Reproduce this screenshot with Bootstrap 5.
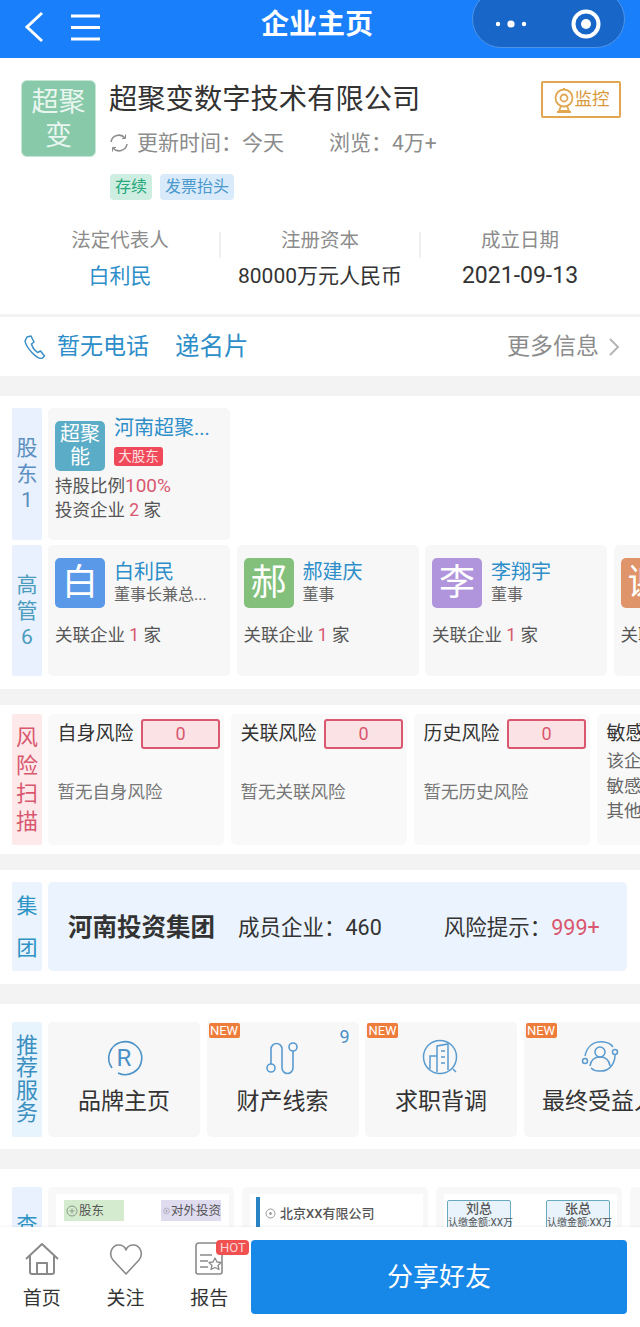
<!DOCTYPE html>
<html lang="zh-CN">
<head>
  <meta charset="UTF-8" />
  <meta name="viewport" content="width=device-width, initial-scale=1.0" />
  <title>企业主页</title>
  <link href="https://cdn.jsdelivr.net/npm/bootstrap@5.3.3/dist/css/bootstrap.min.css" rel="stylesheet" />
  <style>
    body { font-family: Roboto, "Noto Sans CJK SC", sans-serif; color: #333; background: #fff; height: 100vh; overflow: hidden; }
    .page { height: 100vh; }
    .top-bar { height: 58px; flex: 0 0 58px; background: #1a7ffb; display: grid; grid-template-columns: minmax(0, 1fr) auto minmax(0, 1fr); color: #fff; padding: 0 15px 0 0; }
    .top-title { font-size: 28px; font-weight: 700; line-height: 50px; margin-left: 9px; }
    .capsule { width: 153px; height: 58px; margin-top: -10px; padding-top: 10px; background: #1766c8; border: 1px solid #4d94e6; border-radius: 29px; }
    .capsule-cell { height: 48px; flex: 0 0 75px; }
    .capsule-cell + .capsule-line + .capsule-cell { flex: 0 0 76px; }
    .capsule-line { width: 1px; height: 30px; background: #2a74d0; }
    .main-area { flex: 1 1 auto; min-height: 0; overflow: hidden; }

    .company { height: 256px; padding: 22px 19px 0 21px; }
    .logo-box { flex: 0 0 75px; height: 77px; background: #87c9a9; border: 1px solid #c5e5d5; border-radius: 6px; color: #e9f6f0; font-size: 27px; line-height: 34px; }
    .company-name { font-size: 28.300px; line-height: 36px; margin-top: 2px; color: #333; }
    .watch-btn { width: 80px; height: 37px; margin-top: 1px; border: 2px solid #e0a650; border-radius: 2px; color: #d99a3e; font-size: 17.500px; }
    .update-line { font-size: 21px; line-height: 28px; margin-top: 11px; color: #8c8c8c; }
    .tag-line { margin-top: 17px; margin-left: 1px; }
    .state-tag { height: 26px; line-height: 26px; font-size: 16px; padding: 0 5px; border-radius: 4px; }
    .tag-green { background: #cfeee2; color: #25a87a; }
    .tag-blue { background: #d9eafa; color: #4a98cc; }
    .stat-area { margin: 28px -19px 0 -21px; padding: 0 20px; }
    .stat-col { flex: 1 1 0; position: relative; }
    .stat-col + .stat-col::before { content: ""; position: absolute; left: -1px; top: 4px; width: 2px; height: 26px; background: #f0f0f0; }
    .stat-label { font-size: 19.500px; line-height: 26px; color: #8c8c8c; }
    .stat-value { font-size: 21px; line-height: 28px; margin-top: 8px; color: #333; }
    .stat-date { font-size: 23px; }
    .text-link { color: #2d8ec9; }

    .contact-bar { height: 62px; border-top: 3px solid #f2f2f2; padding: 1px 19px 0 24px; font-size: 23px; }
    .more-info { color: #8c8c8c; }
    .band { background: #f3f3f3; }
    .band-20 { height: 20px; }
    .band-16 { height: 16px; }

    .sec { padding-left: 12px; overflow: hidden; }
    .line-wrap { display: flex; gap: 6px; }
    .side-tag { flex: 0 0 30px; width: 30px; background: #e8f1fd; color: #5c8fc0; font-size: 21px; line-height: 26px; border-radius: 2px; text-align: center; }
    .side-red { background: #fde9ea; color: #d9576f; font-size: 22px; line-height: 28px; }
    .side-sky { background: #ebf4fe; color: #2d93c4; line-height: 42px; }
    .side-svc { line-height: 22.500px; font-size: 22px; color: #3a8fc0; }
    .cards { display: flex; gap: 6.500px; flex: 1 1 0; min-width: 0; overflow: hidden; }

    .person-card { flex: 0 0 182px; background: #f7f7f7; border-radius: 5px; padding: 13px 7px 0; font-size: 17.500px; color: #555; white-space: nowrap; }
    .avatar { flex: 0 0 50px; width: 50px; height: 50px; border-radius: 5px; color: #fff; font-size: 36px; line-height: 1; }
    .avatar-small { font-size: 20px; line-height: 23px; background: #5bacc6; }
    .person-name { font-size: 20px; line-height: 24px; color: #2d8ec9; }
    .person-role { font-size: 16px; line-height: 20px; margin-top: 1px; color: #666; }
    .main-badge { display: inline-block; margin-top: 7px; width: 49px; height: 19px; line-height: 19px; font-size: 13.500px; text-align: center; border-radius: 3px; background: #f04a5a; color: #fde0e2; }
    .person-line { line-height: 24px; }
    .num-red { color: #d9576f; }
    .num-big { font-size: 19px; }

    .risk-card { flex: 0 0 176px; height: 131px; background: #f9f9f9; border-radius: 5px; padding: 5px 4px 0 9.500px; white-space: nowrap; }
    .risk-name { font-size: 19px; line-height: 30px; color: #333; }
    .risk-num { width: 79px; height: 30px; line-height: 26px; border: 2px solid #d9576f; border-radius: 3px; background: #fbe3e5; color: #d9576f; font-size: 18px; text-align: center; }
    .risk-note { font-size: 17.500px; line-height: 24px; margin-top: 31px; color: #777; }
    .risk-more { font-size: 17.500px; line-height: 25px; color: #666; }

    .group-panel { flex: 0 0 579px; height: 89px; background: #ebf4fe; border-radius: 5px; padding: 3px 0 0 20px; font-size: 21.500px; white-space: nowrap; }
    .group-name { font-size: 24.500px; font-weight: 700; color: #333; margin-right: 23px; }

    .service-card { flex: 0 0 152px; height: 115px; background: #f7f7f7; border-radius: 5px; padding-top: 16px; position: relative; text-align: center; white-space: nowrap; }
    .service-name { font-size: 23px; line-height: 30px; margin-top: 9px; color: #333; }
    .new-badge { position: absolute; left: 2px; top: 1px; width: 31px; height: 15px; line-height: 15px; font-size: 13px; background: #ee7d3c; color: #fff; border-radius: 2px; }
    .count-mark { position: absolute; right: 9px; top: 4px; font-size: 18px; line-height: 22px; color: #4a90c8; }

    .peek-card { flex: 0 0 186px; background: #f8f8f8; border-radius: 5px; padding: 7px 5px 0 8px; height: 120px; }
    .peek-inner { background: #fff; height: 110px; padding: 6px 8px; font-size: 13px; color: #555; white-space: nowrap; }
    .chip { width: 60px; height: 21px; line-height: 21px; padding-left: 2px; display: flex; align-items: center; gap: 1px; font-size: 12.500px; }
    .chip-green { background: #d5ebcf; }
    .chip-purple { background: #e0dcf0; }
    .peek-firm { border-left: 4px solid #2a83c4; margin: -3px 0 0 -2px; height: 60px; padding: 7px 0 0 5px; font-weight: 500; display: flex; align-items: flex-start; gap: 4px; }
    .peek-firm svg { margin-top: 4px; }
    .peek-box { width: 64px; height: 40px; border: 1px solid #6aa8c0; border-radius: 2px; background: #e8f3fb; text-align: center; }
    .peek-box b { display: block; font-size: 13px; line-height: 16px; font-weight: 500; }
    .peek-box span { display: block; font-size: 10px; line-height: 12px; white-space: nowrap; }

    .bottom-bar { flex: 0 0 100px; height: 100px; background: #fff; box-shadow: 0 -1px 2px rgba(0,0,0,.05); position: relative; }
    .bottom-nav { flex: 0 0 251px; }
    .nav-item { flex: 1 1 0; padding-top: 14px; text-align: center; position: relative; font-size: 19px; color: #333; }
    .nav-item svg { display: block; margin: 0 auto 9px; }
    .nav-text { line-height: 26px; }
    .hot-badge { position: absolute; left: 49px; top: 13px; width: 33px; height: 15px; line-height: 15px; font-size: 13px; background: #f05050; color: #fbd5d5; border-radius: 4px; }
    .share-btn { flex: 0 0 376px; height: 74px; margin-top: 13px; background: #1888e8; border: 0; border-radius: 4px; color: #fff; font-size: 26px; }
    .share-btn:hover { background: #1888e8; color: #fff; }
  </style>
</head>
<body>
  <div class="page d-flex flex-column">
    <!-- 顶部导航 -->
    <header class="top-bar">
      <div class="d-flex align-items-start">
        <svg width="110" height="58" viewBox="0 0 110 58" fill="none" stroke="#fff" stroke-width="3">
          <path d="M42 13 27 27l15 14" />
          <path d="M71 16h29M71 27.500h29M71 39h29" />
        </svg>
      </div>
      <div class="top-title">企业主页</div>
      <div class="d-flex justify-content-end align-items-start">
        <div class="capsule d-flex align-items-center">
          <div class="capsule-cell d-flex align-items-center justify-content-center">
            <svg width="32" height="10" viewBox="0 0 32 10" fill="#fff"><circle cx="3" cy="5" r="2.200" /><circle cx="16" cy="5" r="3.600" /><circle cx="29" cy="5" r="2.200" /></svg>
          </div>
          <div class="capsule-line"></div>
          <div class="capsule-cell d-flex align-items-center justify-content-center">
            <svg width="32" height="32" viewBox="0 0 32 32"><circle cx="16" cy="16" r="12.500" fill="none" stroke="#fff" stroke-width="4" /><circle cx="16" cy="16" r="5" fill="#fff" /></svg>
          </div>
        </div>
      </div>
    </header>

    <main class="main-area">
      <!-- 公司信息 -->
      <section class="company">
        <div class="d-flex">
          <div class="logo-box d-flex align-items-center justify-content-center text-center">超聚<br />变</div>
          <div class="flex-grow-1" style="margin-left: 13px">
            <div class="d-flex justify-content-between align-items-start">
              <div class="company-name">超聚变数字技术有限公司</div>
              <div class="watch-btn d-flex align-items-center justify-content-center">
                <svg width="22" height="28" viewBox="0 0 22 28" fill="none" stroke="#e0a650" stroke-width="1.800">
                  <circle cx="11" cy="12" r="8.500" /><circle cx="11" cy="12" r="3.500" /><path d="M11 2v2M8 20l-2 5h10l-2-5M4 26h14" />
                </svg>
                <span>监控</span>
              </div>
            </div>
            <div class="update-line d-flex align-items-center">
              <svg width="20" height="20" viewBox="0 0 20 20" fill="none" stroke="#8c8c8c" stroke-width="1.500">
                <path d="M2 9a8 8 0 0 1 14-4M18 11a8 8 0 0 1-14 4" />
                <path d="M16.500 1.500V5.500h-3.500M3.500 18.500V14.500h3.500" stroke-width="1" />
              </svg>
              <span style="margin-left: 8px">更新时间：今天</span>
              <span style="margin-left: 45px">浏览：4万+</span>
            </div>
            <div class="tag-line d-flex gap-2">
              <span class="state-tag tag-green">存续</span>
              <span class="state-tag tag-blue">发票抬头</span>
            </div>
          </div>
        </div>
        <div class="stat-area d-flex text-center">
          <div class="stat-col"><div class="stat-label">法定代表人</div><div class="stat-value text-link">白利民</div></div>
          <div class="stat-col"><div class="stat-label">注册资本</div><div class="stat-value">80000万元人民币</div></div>
          <div class="stat-col"><div class="stat-label">成立日期</div><div class="stat-value stat-date">2021-09-13</div></div>
        </div>
      </section>

      <!-- 联系方式 -->
      <section class="contact-bar d-flex align-items-center">
        <svg width="22" height="24" viewBox="0 0 22 24" fill="none" stroke="#3a8fc8" stroke-width="1.500" stroke-linejoin="round">
          <path d="M3 2 7 1l3 6-2.500 2c1 3.500 3 6.500 6 8.500l3-1.500 4 5-2.500 2.500C12 24 2 12 1 6z" />
        </svg>
        <span class="text-link" style="margin-left: 11px">暂无电话</span>
        <span class="text-link" style="margin-left: 26px; font-size: 24.500px">递名片</span>
        <span class="more-info ms-auto">更多信息</span>
        <svg class="ms-2" width="14" height="20" viewBox="0 0 14 20" fill="none" stroke="#b5b5b5" stroke-width="2"><path d="m3 2 8 8-8 8" /></svg>
      </section>
      <div class="band band-20"></div>

      <!-- 股东 高管 -->
      <section class="sec" style="padding-top: 12px; padding-bottom: 13px">
        <div class="line-wrap" style="height: 132px; margin-bottom: 5px">
          <div class="side-tag d-flex align-items-center justify-content-center">股<br />东<br />1</div>
          <div class="cards">
            <div class="person-card">
              <div class="d-flex">
                <div class="avatar avatar-small d-flex align-items-center justify-content-center text-center">超聚<br />能</div>
                <div style="margin-left: 9px; margin-top: -5px">
                  <div class="person-name">河南超聚...</div>
                  <div class="main-badge">大股东</div>
                </div>
              </div>
              <div class="person-line" style="margin-top: 3px">持股比例<span class="num-red num-big">100%</span></div>
              <div class="person-line">投资企业 <span class="num-red">2</span> 家</div>
            </div>
          </div>
        </div>
        <div class="line-wrap" style="height: 131px">
          <div class="side-tag d-flex align-items-center justify-content-center" style="color: #4c9cc0">高<br />管<br />6</div>
          <div class="cards" id="officerCards"></div>
        </div>
      </section>
      <div class="band band-16"></div>

      <!-- 风险扫描 -->
      <section class="sec" style="padding-top: 9px; padding-bottom: 9px">
        <div class="line-wrap">
          <div class="side-tag side-red d-flex align-items-center justify-content-center" style="height: 131px">风<br />险<br />扫<br />描</div>
          <div class="cards" style="gap: 7px" id="riskCards"></div>
        </div>
      </section>
      <div class="band band-16"></div>

      <!-- 集团 -->
      <section class="sec" style="padding-top: 12px; padding-bottom: 13px">
        <div class="line-wrap">
          <div class="side-tag side-sky d-flex align-items-center justify-content-center" style="height: 89px">集<br />团</div>
          <div class="group-panel d-flex align-items-center">
            <span class="group-name">河南投资集团</span>
            <span>成员企业：460</span>
            <span style="margin-left: 62px">风险提示：<span class="num-red">999+</span></span>
          </div>
        </div>
      </section>
      <div class="band band-20"></div>

      <!-- 推荐服务 -->
      <section class="sec" style="padding-top: 18px; padding-bottom: 12px">
        <div class="line-wrap">
          <div class="side-tag side-svc d-flex align-items-center justify-content-center" style="height: 115px; background: #e8f4fd">推<br />荐<br />服<br />务</div>
          <div class="cards">
            <div class="service-card">
              <svg class="d-block mx-auto" width="40" height="40" viewBox="0 0 40 40" fill="none" stroke="#4a92c8" stroke-width="1.600">
                <path d="M8 30a16.500 16.500 0 1 1 6 5" />
                <text x="20" y="28" text-anchor="middle" font-family="Roboto" font-size="24" fill="#4a92c8" stroke="none">R</text>
              </svg>
              <div class="service-name">品牌主页</div>
            </div>
            <div class="service-card">
              <span class="new-badge">NEW</span>
              <span class="count-mark">9</span>
              <svg class="d-block mx-auto" width="40" height="40" viewBox="0 0 40 40" fill="none" stroke="#5a9bd0" stroke-width="1.600">
                <circle cx="8" cy="30" r="4" /><circle cx="30" cy="9" r="4" />
                <path d="M8 26V11a5.500 5.500 0 0 1 11 0v19a5.500 5.500 0 0 0 11 0V13" />
              </svg>
              <div class="service-name">财产线索</div>
            </div>
            <div class="service-card">
              <span class="new-badge">NEW</span>
              <svg class="d-block mx-auto" width="40" height="40" viewBox="0 0 40 40" fill="none" stroke="#5a9bd0" stroke-width="1.500">
                <circle cx="19" cy="19" r="16.500" />
                <path d="M16 34V8l11-2v26M16 18H9v13M20 13h4M20 19h4M20 25h4M32 31l3 3" />
              </svg>
              <div class="service-name">求职背调</div>
            </div>
            <div class="service-card">
              <span class="new-badge">NEW</span>
              <svg class="d-block mx-auto" width="40" height="40" viewBox="0 0 40 40" fill="none" stroke="#5a9bd0" stroke-width="1.500">
                <circle cx="20" cy="14" r="5" />
                <path d="M10 28c1-7 5-9 10-9s9 2 10 9" />
                <path d="M5 18C7 8 14 3 24 4c4 .5 7 2 9 5M35 17c0 10-7 17-16 16-3 0-6-1-8-3" />
                <circle cx="5" cy="23" r="2.500" /><circle cx="35" cy="14" r="2.500" />
              </svg>
              <div class="service-name">最终受益人</div>
            </div>
          </div>
        </div>
      </section>
      <div class="band band-20"></div>

      <!-- 查 -->
      <section class="sec" style="padding-top: 18px">
        <div class="line-wrap">
          <div class="side-tag" style="height: 120px; padding-top: 25px; line-height: 26px; color: #2d93c4">查</div>
          <div class="cards" style="gap: 8px">
            <div class="peek-card">
              <div class="peek-inner d-flex justify-content-between">
                <div class="chip chip-green">
                  <svg width="12" height="12" viewBox="0 0 12 12" fill="none" stroke="#8a9a88"><circle cx="6" cy="6" r="5" /><path d="M3.500 6h5M6 3.500v5" /></svg>股东
                </div>
                <div class="chip chip-purple">
                  <svg width="12" height="12" viewBox="0 0 12 12" fill="none" stroke="#9a98a8"><circle cx="6" cy="6" r="5" /><path d="M3.500 6h5M6 3.500v5" /></svg>对外投资
                </div>
              </div>
            </div>
            <div class="peek-card">
              <div class="peek-inner">
                <div class="peek-firm">
                  <svg width="11" height="11" viewBox="0 0 11 11" fill="none" stroke="#999"><circle cx="5.500" cy="5.500" r="4.500" /><circle cx="5.500" cy="5.500" r="1" fill="#999" /></svg>
                  <span>北京XX有限公司</span>
                </div>
              </div>
            </div>
            <div class="peek-card">
              <div class="peek-inner d-flex justify-content-between" style="padding-left: 3px; padding-right: 7px">
                <div class="peek-box"><b>刘总</b><span>认缴金额:XX万</span></div>
                <div class="peek-box"><b>张总</b><span>认缴金额:XX万</span></div>
              </div>
            </div>
            <div class="peek-card"></div>
          </div>
        </div>
      </section>
    </main>

    <!-- 底部操作栏 -->
    <footer class="bottom-bar d-flex">
      <nav class="bottom-nav d-flex">
        <div class="nav-item">
          <svg width="36" height="36" viewBox="0 0 36 36" fill="none" stroke="#8a8a8a" stroke-width="2" stroke-linejoin="round">
            <path d="M2 18 18 3l16 15M6 15v16a2 2 0 0 0 2 2h20a2 2 0 0 0 2-2V15M13 33V22h10v11" />
          </svg>
          <div class="nav-text">首页</div>
        </div>
        <div class="nav-item">
          <svg width="36" height="36" viewBox="0 0 36 36" fill="none" stroke="#8a8a8a" stroke-width="1.600" stroke-linejoin="round">
            <path d="M18 33 5 19C0 13 4 4 10.500 4c4 0 6.500 2 7.500 5 1-3 3.500-5 7.500-5C32 4 36 13 31 19z" />
          </svg>
          <div class="nav-text">关注</div>
        </div>
        <div class="nav-item">
          <svg width="36" height="36" viewBox="0 0 36 36" fill="none" stroke="#8a8a8a" stroke-width="1.600" stroke-linejoin="round">
            <path d="M8 2h17l6 6v23a2 2 0 0 1-2 2H7a2 2 0 0 1-2-2V5a3 3 0 0 1 3-3z" />
            <path d="M9 14h12M9 20h8M9 26h8M24 17l2 4 4 .5-3 3 1 4-4-2-4 2 1-4-3-3 4-.5z" stroke-width="1.300" />
          </svg>
          <div class="nav-text">报告</div>
          <span class="hot-badge">HOT</span>
        </div>
      </nav>
      <button class="btn share-btn" type="button">分享好友</button>
    </footer>
  </div>

  <script>
    // 高管卡片
    const officers = [
      { ch: '白', color: '#5a98e8', name: '白利民', role: '董事长兼总...' },
      { ch: '郝', color: '#82c07c', name: '郝建庆', role: '董事' },
      { ch: '李', color: '#b094dc', name: '李翔宇', role: '董事' },
      { ch: '谢', color: '#e0946a', name: '', role: '' }
    ];
    document.getElementById('officerCards').innerHTML = officers.map(o => `
      <div class="person-card">
        <div class="d-flex">
          <div class="avatar d-flex align-items-center justify-content-center" style="background: ${o.color}">${o.ch}</div>
          <div style="margin-left: 9px; margin-top: 2px">
            <div class="person-name">${o.name}</div>
            <div class="person-role">${o.role}</div>
          </div>
        </div>
        <div class="person-line" style="margin-top: 15px">关联企业 <span class="num-red">1</span> 家</div>
      </div>`).join('');

    // 风险卡片
    const risks = ['自身风险', '关联风险', '历史风险'];
    document.getElementById('riskCards').innerHTML = risks.map(r => `
      <div class="risk-card">
        <div class="d-flex justify-content-between">
          <span class="risk-name">${r}</span>
          <span class="risk-num">0</span>
        </div>
        <div class="risk-note">暂无${r}</div>
      </div>`).join('') + `
      <div class="risk-card">
        <div class="risk-name">敏感风险</div>
        <div class="risk-more">该企业</div>
        <div class="risk-more">敏感</div>
        <div class="risk-more">其他</div>
      </div>`;
  </script>
  <script src="https://cdn.jsdelivr.net/npm/bootstrap@5.3.3/dist/js/bootstrap.bundle.min.js"></script>
</body>
</html>
